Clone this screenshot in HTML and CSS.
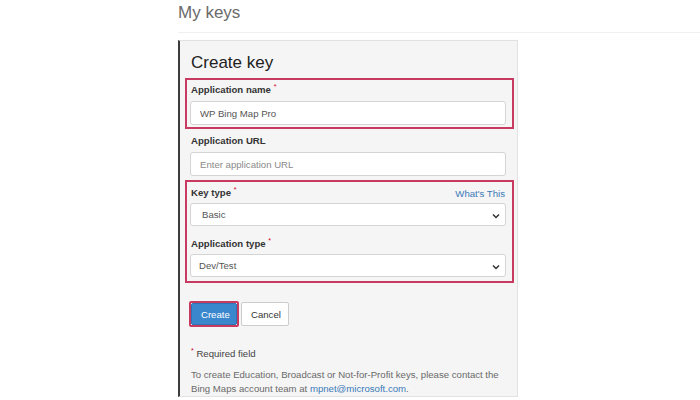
FILE: index.html
```html
<!DOCTYPE html>
<html lang="en">
<head>
<meta charset="utf-8">
<title>My keys</title>
<link rel="stylesheet" href="styles.css">
</head>
<body>
<div class="page">
  <h1 class="title">My keys</h1>
  <div class="rule"></div>
  <div class="panel">
    <h2 class="panel-title">Create key</h2>
    <div class="highlight hl-first">
      <label class="label">Application name <sup class="req">*</sup></label>
      <div class="field">WP Bing Map Pro</div>
    </div>
    <div class="plain">
      <label class="label">Application URL</label>
      <div class="field placeholder">Enter application URL</div>
    </div>
    <div class="highlight hl-second">
      <div class="label-row">
        <label class="label">Key type <sup class="req">*</sup></label>
        <a class="link">What's This</a>
      </div>
      <div class="field select sel-basic">
        <span>Basic</span>
        <svg class="chev" width="8" height="6" viewBox="0 0 8 6"><path d="M1 1.5 L4 4.5 L7 1.5" fill="none" stroke="#333" stroke-width="1.5"/></svg>
      </div>
      <label class="label label-gap">Application type <sup class="req">*</sup></label>
      <div class="field select">
        <span>Dev/Test</span>
        <svg class="chev" width="8" height="6" viewBox="0 0 8 6"><path d="M1 1.5 L4 4.5 L7 1.5" fill="none" stroke="#333" stroke-width="1.5"/></svg>
      </div>
    </div>
    <div class="actions">
      <div class="btn-ring"><button class="btn btn-primary">Create</button></div>
      <button class="btn btn-default">Cancel</button>
    </div>
    <p class="required"><span class="req-mark">*</span> Required field</p>
    <p class="note">To create Education, Broadcast or Not-for-Profit keys, please contact the<br>Bing Maps account team at <a class="mail">mpnet@microsoft.com</a>.</p>
  </div>
</div>
</body>
</html>
```

FILE: styles.css
```css
* { box-sizing: border-box; }
html, body { margin: 0; padding: 0; background: #fff; }
body {
  font-family: "Liberation Sans", Arial, sans-serif;
  font-size: 9.6px;
  color: #333;
  width: 700px;
  height: 400px;
  overflow: hidden;
}
.page { padding-left: 178px; }
.title {
  margin: 0;
  font-weight: normal;
  font-size: 17px;
  line-height: 26px;
  color: #6a6a6a;
}
.rule {
  height: 1px;
  background: #f0f0f0;
  margin-top: 6px;
}
.panel {
  margin-top: 7px;
  width: 340px;
  background: #f5f5f5;
  border: 1px solid #e2e2e2;
  border-left: 2px solid #3c3c3c;
  padding: 0 3px 0 5px;
}
.panel-title {
  margin: 0;
  padding-left: 6px;
  font-weight: normal;
  font-size: 17px;
  line-height: 22px;
  padding-top: 11px;
  color: #222;
}
.highlight {
  border: 2px solid #c83a62;
  padding: 3px 6px 2px 3px;
}
.hl-first { margin-top: 4px; }
.hl-second { margin-top: 4px; padding-top: 4px; padding-bottom: 4px; }
.plain { padding: 5px 8px 0 5px; }
.label {
  display: block;
  font-weight: bold;
  line-height: 14px;
  padding-left: 1px;
  color: #333;
}
.label-gap { margin-top: 11px; }
.label-row {
  display: flex;
  justify-content: space-between;
  align-items: center;
}
.label-row .label { display: inline-block; }
.req {
  color: #d0021b;
  font-size: 7px;
  vertical-align: top;
  line-height: 8px;
  font-weight: normal;
}
.link { color: #3a7ab8; text-decoration: none; }
.label-row .link { padding-right: 1px; }
.field {
  margin-top: 4px;
  height: 24px;
  background: #fff;
  border: 1px solid #d4d4d4;
  border-radius: 3px;
  padding: 0 9px;
  display: flex;
  align-items: center;
  color: #555;
}
.placeholder { color: #8a8a8a; }
.select {
  position: relative;
  height: 23px;
  margin-top: 3px;
  padding-left: 8px;
}
.sel-basic { padding-left: 11px; }
.chev { position: absolute; right: 5px; top: 9px; }
.actions {
  display: flex;
  align-items: center;
  gap: 2px;
  margin-top: 18px;
  padding-left: 4px;
}
.btn-ring {
  border: 2px solid #c83a62;
  border-radius: 2px;
}
.btn {
  font-family: "Liberation Sans", Arial, sans-serif;
  font-size: 9.6px;
  height: 22px;
  padding: 0 9px;
  border-radius: 2px;
  cursor: pointer;
}
.btn-primary {
  display: block;
  background: #3b87cd;
  color: #fff;
  border: 1px solid #2f73b2;
  width: 46px;
}
.btn-default {
  height: 24px;
  background: #fff;
  color: #333;
  border: 1px solid #ccc;
  width: 48px;
}
.required {
  margin: 20px 0 0 6px;
  line-height: 14px;
  color: #444;
}
.req-mark {
  color: #d0021b;
  font-size: 7px;
  vertical-align: top;
  line-height: 8px;
}
.note {
  margin: 7px 0 0 6px;
  padding: 0 4px 0 0;
  line-height: 14px;
  color: #6a6a6a;
}
.mail { color: #3a7ab8; text-decoration: none; }
```
